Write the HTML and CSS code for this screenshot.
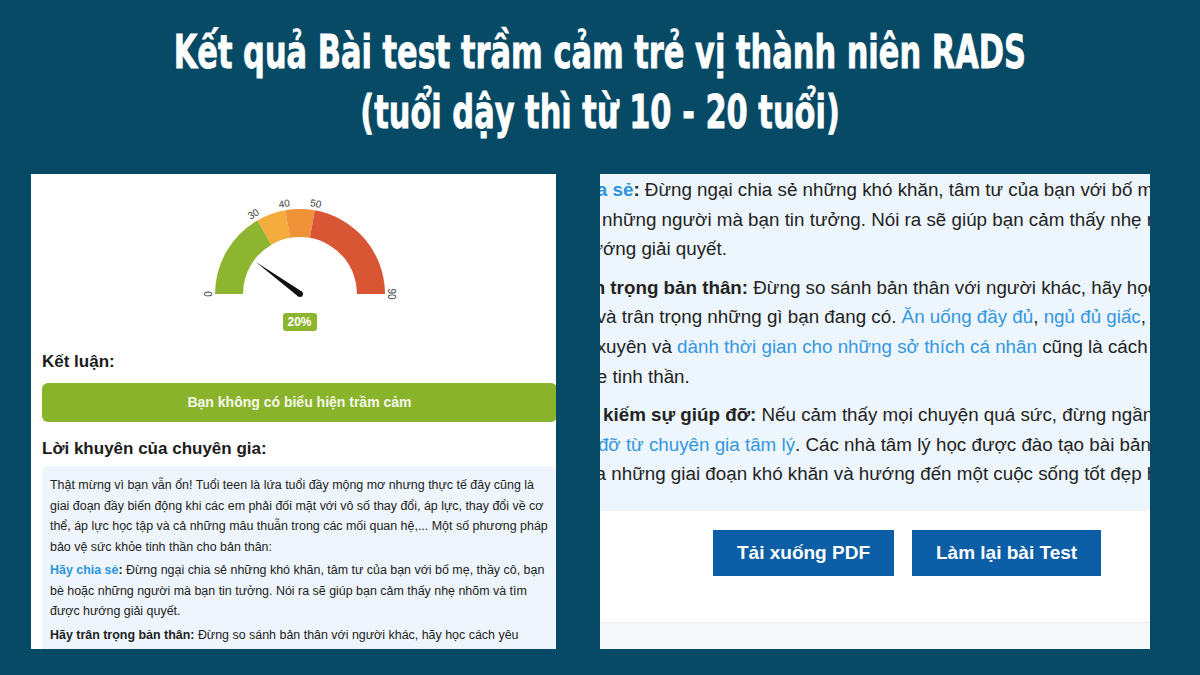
FILE: index.html
```html
<!DOCTYPE html>
<html lang="vi">
<head>
<meta charset="utf-8">
<title>Kết quả Bài test trầm cảm RADS</title>
<link rel="stylesheet" href="styles.css">
</head>
<body>
<main class="poster">
  <h1 class="title">
    <span class="title-line">Kết quả Bài test trầm cảm trẻ vị thành niên RADS</span>
    <span class="title-line">(tuổi dậy thì từ 10 - 20 tuổi)</span>
  </h1>

  <div class="panels">
    <section class="card card-left">
      <div class="gauge">
        <svg class="gauge-svg" width="200" height="110" viewBox="0 0 200 110">
          <path d="M15 100 A85 85 0 0 1 57.5 26.39 L71.5 50.64 A57 57 0 0 0 43 100 Z" fill="#8db52f"/>
          <path d="M57.5 26.39 A85 85 0 0 1 85.24 16.29 L90.1 43.87 A57 57 0 0 0 71.5 50.64 Z" fill="#f4ac3c"/>
          <path d="M85.24 16.29 A85 85 0 0 1 114.76 16.29 L109.9 43.87 A57 57 0 0 0 90.1 43.87 Z" fill="#ef9238"/>
          <path d="M114.76 16.29 A85 85 0 0 1 185 100 L157 100 A57 57 0 0 0 109.9 43.87 Z" fill="#d95635"/>
          <g class="gauge-labels">
            <text transform="translate(12 100) rotate(-90)">0</text>
            <text transform="translate(55 23) rotate(-30)">30</text>
            <text transform="translate(84.7 13) rotate(-10)">40</text>
            <text transform="translate(115.3 13) rotate(10)">50</text>
            <text transform="translate(188 100) rotate(90)">90</text>
          </g>
          <polygon points="101.8,97.6 98.2,102.4 55.5,67.7" fill="#111"/>
          <circle cx="100" cy="100" r="3" fill="#111"/>
        </svg>
        <span class="badge">20%</span>
      </div>

      <h2 class="section-title">Kết luận:</h2>
      <div class="verdict">Bạn không có biểu hiện trầm cảm</div>

      <h2 class="section-title section-title-advice">Lời khuyên của chuyên gia:</h2>
      <div class="advice">
        <p>Thật mừng vì bạn vẫn ổn! Tuổi teen là lứa tuổi đầy mộng mơ nhưng thực tế đây cũng là<br>giai đoạn đầy biến động khi các em phải đối mặt với vô số thay đổi, áp lực, thay đổi về cơ<br>thể, áp lực học tập và cả những mâu thuẫn trong các mối quan hệ,... Một số phương pháp<br>bảo vệ sức khỏe tinh thần cho bản thân:</p>
        <p><b class="hl">Hãy chia sẻ</b><b>:</b> Đừng ngại chia sẻ những khó khăn, tâm tư của bạn với bố mẹ, thầy cô, bạn<br>bè hoặc những người mà bạn tin tưởng. Nói ra sẽ giúp bạn cảm thấy nhẹ nhõm và tìm<br>được hướng giải quyết.</p>
        <p><b>Hãy trân trọng bản thân:</b> Đừng so sánh bản thân với người khác, hãy học cách yêu<br>thương và trân trọng những gì bạn đang có.</p>
      </div>
    </section>

    <section class="card card-right">
      <div class="zoom-area">
        <div class="zoom-text">
          <p><b class="hl">Hãy chia sẻ</b><b>:</b> Đừng ngại chia sẻ những khó khăn, tâm tư của bạn với bố mẹ, thầy cô, bạn<br>bè hoặc những người mà bạn tin tưởng. Nói ra sẽ giúp bạn cảm thấy nhẹ nhõm và tìm<br>được hướng giải quyết.</p>
          <p><b>Hãy trân trọng bản thân:</b> Đừng so sánh bản thân với người khác, hãy học cách yêu<br>thương và trân trọng những gì bạn đang có. <span class="link">Ăn uống đầy đủ</span>, <span class="link">ngủ đủ giấc</span>, <span class="link">tập thể dục</span><br>thường xuyên và <span class="link">dành thời gian cho những sở thích cá nhân</span> cũng là cách tốt để chăm sóc<br>sức khỏe tinh thần.</p>
          <p><b>Hãy tìm kiếm sự giúp đỡ:</b> Nếu cảm thấy mọi chuyện quá sức, đừng ngần ngại tìm kiếm<br><span class="link">sự giúp đỡ từ chuyên gia tâm lý</span>. Các nhà tâm lý học được đào tạo bài bản sẽ giúp bạn<br>vượt qua những giai đoạn khó khăn và hướng đến một cuộc sống tốt đẹp hơn.</p>
        </div>
      </div>
      <div class="actions">
        <button class="btn" type="button">Tải xuống PDF</button>
        <button class="btn" type="button">Làm lại bài Test</button>
      </div>
      <div class="card-foot"></div>
    </section>
  </div>
</main>
</body>
</html>
```

FILE: styles.css
```css
* { box-sizing: border-box; }

html, body {
  margin: 0;
  padding: 0;
}

body {
  width: 1200px;
  height: 675px;
  overflow: hidden;
  background: #064a66;
  font-family: "Liberation Sans", Arial, sans-serif;
}

.poster {
  width: 1200px;
  height: 675px;
  display: flex;
  flex-direction: column;
}

.title {
  margin: 0;
  padding-top: 22px;
  height: 174px;
  display: flex;
  flex-direction: column;
  align-items: center;
  color: #ffffff;
  font-family: "DejaVu Sans Condensed", "DejaVu Sans", sans-serif;
  font-stretch: condensed;
  font-weight: 700;
  font-size: 47px;
  line-height: 60px;
  -webkit-text-stroke: 0.8px #ffffff;
}

.title-line {
  display: inline-block;
  white-space: nowrap;
  transform: scaleX(0.72);
}

.panels {
  display: flex;
  gap: 44px;
  padding-left: 31px;
  height: 475px;
}

.card {
  background: #ffffff;
  height: 475px;
  overflow: hidden;
}

/* ---------- left card ---------- */
.card-left {
  width: 525px;
  padding: 20px 0 0 11px;
}

.card-left > * {
  width: 515px;
}

.gauge {
  display: flex;
  flex-direction: column;
  align-items: center;
}

.gauge-svg {
  display: block;
}

.gauge-labels text {
  font-family: "Liberation Sans", Arial, sans-serif;
  font-size: 10px;
  fill: #3a3a3a;
  text-anchor: middle;
}

.badge {
  margin-top: 9px;
  width: 34px;
  height: 18px;
  border-radius: 3px;
  background: #8db52f;
  color: #ffffff;
  font-size: 12px;
  font-weight: 700;
  line-height: 18px;
  text-align: center;
}

.section-title {
  margin: 21px 0 0;
  font-size: 17px;
  line-height: 20px;
  font-weight: 700;
  color: #1c1c1c;
}

.section-title-advice {
  margin-top: 17px;
}

.verdict {
  margin-top: 11px;
  height: 39px;
  border-radius: 6px;
  background: #8ab32c;
  color: #f4f8ea;
  font-size: 14px;
  font-weight: 700;
  line-height: 39px;
  text-align: center;
}

.advice {
  margin-top: 7px;
  background: #eef5fc;
  border-radius: 6px;
  padding: 9px 8px 20px;
  font-size: 12.45px;
  line-height: 20.5px;
  color: #222222;
  white-space: nowrap;
}

.advice p {
  margin: 0 0 3px;
}

.hl {
  color: #2b93df;
}

/* ---------- right card ---------- */
.card-right {
  width: 550px;
  display: flex;
  flex-direction: column;
}

.zoom-area {
  height: 337px;
  background: #eef6fd;
  overflow: hidden;
}

.zoom-text {
  margin: 1px 0 0 -70px;
  font-size: 18.8px;
  line-height: 29.7px;
  color: #232323;
  white-space: nowrap;
}

.zoom-text p {
  margin: 0 0 8.5px;
}

.link {
  color: #3597e0;
}

.actions {
  height: 111px;
  background: #ffffff;
  display: flex;
  align-items: flex-start;
  gap: 18px;
  padding: 19px 0 0 113px;
}

.btn {
  height: 46px;
  padding: 0 24px;
  border: none;
  border-radius: 0;
  background: #0c5ea6;
  color: #ffffff;
  font-family: "Liberation Sans", Arial, sans-serif;
  font-size: 19px;
  font-weight: 700;
}

.card-foot {
  flex: 1;
  background: #f7f8fa;
  border-top: 1px solid #eceef1;
}
```
